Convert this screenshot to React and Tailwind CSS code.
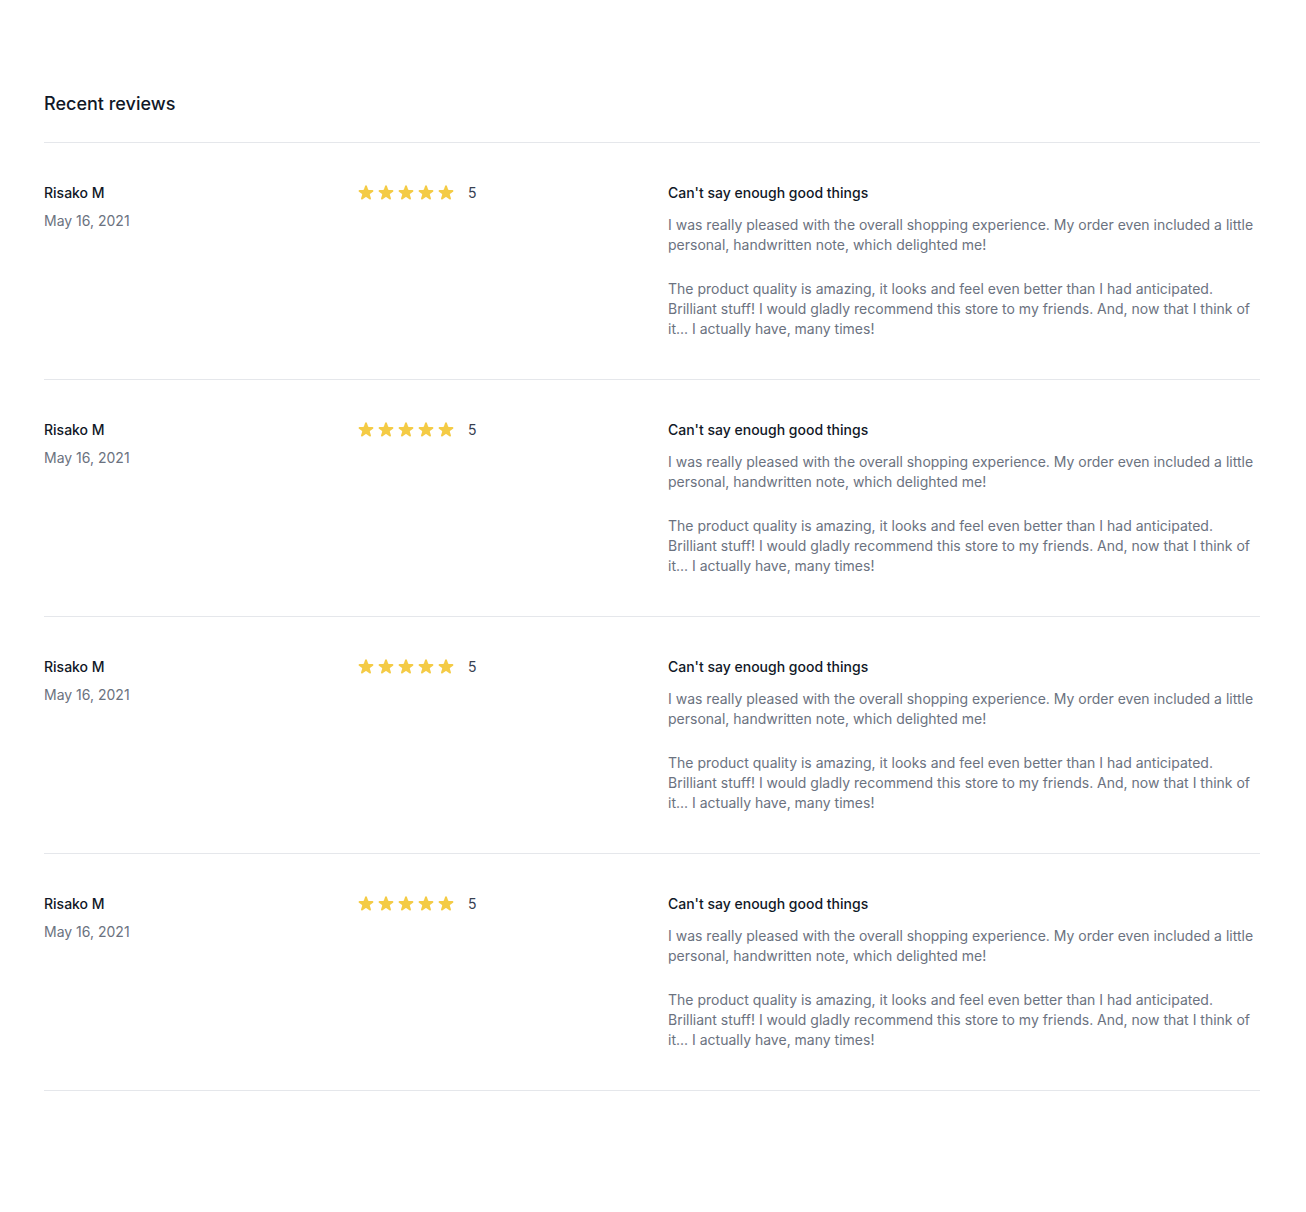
import React from "react";

const reviews = Array.from({ length: 4 }, (_, i) => ({
  id: i,
  author: "Risako M",
  date: "May 16, 2021",
  title: "Can't say enough good things",
}));

function Star() {
  return (
    <svg viewBox="0 0 20 20" fill="currentColor" className="h-5 w-5 shrink-0 text-[#f4cb45]">
      <path d="M9.049 2.927c.3-.921 1.603-.921 1.902 0l1.07 3.292a1 1 0 00.95.69h3.462c.969 0 1.371 1.24.588 1.81l-2.8 2.034a1 1 0 00-.364 1.118l1.07 3.292c.3.921-.755 1.688-1.54 1.118l-2.8-2.034a1 1 0 00-1.175 0l-2.8 2.034c-.784.57-1.838-.197-1.539-1.118l1.07-3.292a1 1 0 00-.364-1.118L2.98 8.72c-.783-.57-.38-1.81.588-1.81h3.461a1 1 0 00.951-.69l1.07-3.292z" />
    </svg>
  );
}

export default function App() {
  return (
    <div className="bg-white min-h-[1212px] font-[Inter,sans-serif]">
      <div className="pl-[44px] pr-[46px] pt-[90px] pb-24">
        <h2 className="text-lg leading-7 font-medium text-[#111827]">Recent reviews</h2>
        <div className="mt-6 border-t border-b border-[#e5e7eb] pb-10">
          {reviews.map((r, idx) => (
            <div
              key={r.id}
              className={`grid grid-cols-12 gap-x-8 pt-10 ${idx > 0 ? "mt-10 border-t border-[#e5e7eb]" : ""}`}
            >
              <div className="col-span-3 row-start-1 col-start-1 flex flex-col items-start text-sm leading-5">
                <p className="font-medium text-[#111827]">{r.author}</p>
                <time className="mt-2 text-[#6b7280]">{r.date}</time>
              </div>
              <div className="col-start-4 col-span-9 row-start-1 grid grid-cols-3 gap-x-8 items-start">
                <div className="col-span-1 flex items-center">
                  <div className="flex items-center">
                    <Star />
                    <Star />
                    <Star />
                    <Star />
                    <Star />
                  </div>
                  <p className="ml-3 text-sm leading-5 text-[#374151]">5</p>
                </div>
                <div className="col-span-2">
                  <h3 className="text-sm leading-5 font-medium text-[#111827]">{r.title}</h3>
                  <div className="mt-3 space-y-6 text-sm leading-5 text-[#6b7280]">
                    <p>
                      I was really pleased with the overall shopping experience. My order even included a little personal, handwritten note, which delighted me!
                    </p>
                    <p>
                      The product quality is amazing, it looks and feel even better than I had anticipated. Brilliant stuff! I would gladly recommend this store to my friends. And, now that I think of it... I actually have, many times!
                    </p>
                  </div>
                </div>
              </div>
            </div>
          ))}
        </div>
      </div>
    </div>
  );
}
